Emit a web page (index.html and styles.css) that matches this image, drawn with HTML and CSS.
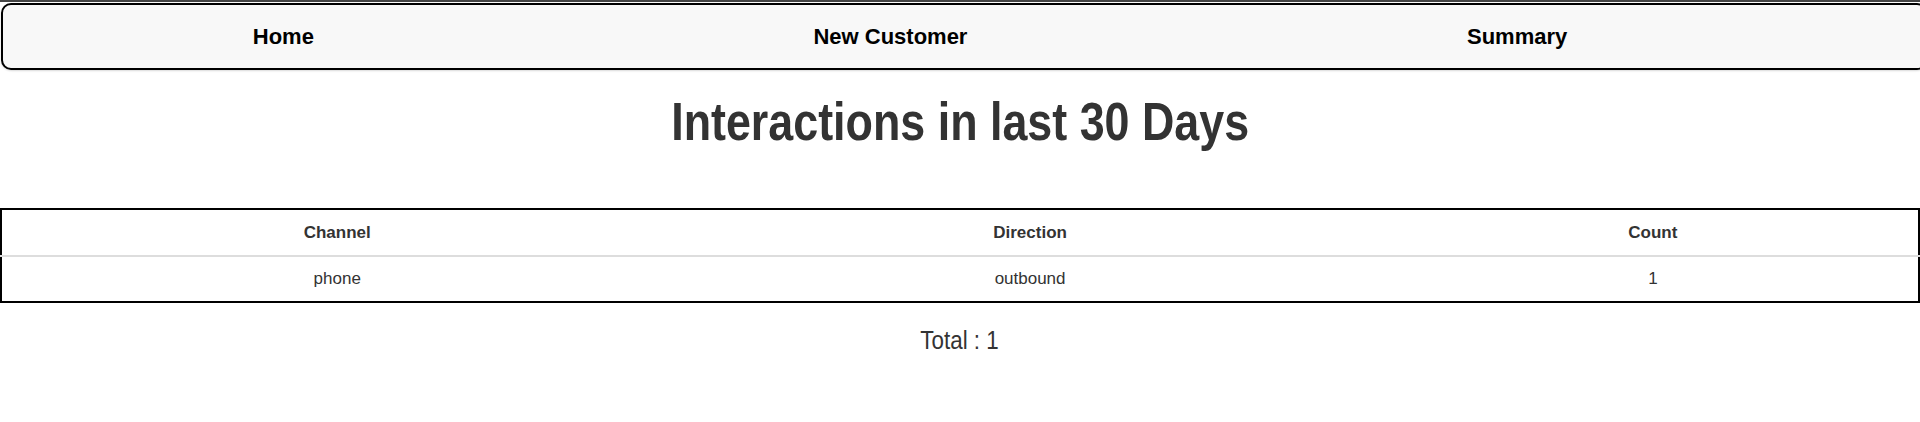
FILE: index.html
```html
<!DOCTYPE html>
<html lang="en">
<head>
<meta charset="utf-8">
<title>Interactions in last 30 Days</title>
<link rel="stylesheet" href="styles.css">
</head>
<body>
<div class="topbar"></div>
<nav class="nav">
  <div class="nav-links">
    <a class="nav-link" href="#">Home</a>
    <a class="nav-link" href="#">New Customer</a>
    <a class="nav-link" href="#">Summary</a>
  </div>
</nav>
<h1 class="title"><span class="narrow">Interactions in last 30 Days</span></h1>
<table class="table">
  <thead>
    <tr><th>Channel</th><th>Direction</th><th>Count</th></tr>
  </thead>
  <tbody>
    <tr><td>phone</td><td>outbound</td><td>1</td></tr>
  </tbody>
</table>
<p class="total"><span class="narrow narrow-total">Total : 1</span></p>
</body>
</html>
```
FILE: styles.css
```css
html, body {
  margin: 0;
  padding: 0;
  background: #fff;
  overflow-x: hidden;
}
body {
  font-family: "Liberation Sans", Arial, sans-serif;
  color: #333;
}
.topbar {
  height: 2px;
  background: #444;
}
.nav {
  box-sizing: border-box;
  margin: 1px 0 0 1px;
  width: 1926px;
  height: 67px;
  border: 2px solid #000;
  border-radius: 10px;
  background: #f8f8f8;
  box-shadow: 0 1px 2px rgba(0, 0, 0, 0.15);
}
.nav-links {
  display: flex;
  justify-content: space-around;
  align-items: center;
  width: 1814px;
  height: 100%;
}
.nav-link {
  font-size: 22px;
  font-weight: bold;
  line-height: 25px;
  color: #000;
  text-decoration: none;
}
.title {
  margin: 20px 0 0;
  font-size: 54px;
  line-height: 62px;
  font-weight: bold;
  text-align: center;
  color: #333;
}
.narrow {
  display: inline-block;
  transform: scaleX(0.83);
}
.narrow-total {
  transform: scaleX(0.86);
}
.table {
  margin-top: 56px;
  width: 100%;
  border-collapse: collapse;
  border: 2px solid #000;
  font-size: 17px;
  color: #333;
}
.table th,
.table td {
  line-height: 19px;
  text-align: center;
  padding: 12px 9px 13px;
}
.table th {
  padding-top: 13px;
  font-weight: bold;
  border-bottom: 2px solid #ddd;
}
.total {
  margin: 22px 0 0;
  font-size: 26px;
  line-height: 30px;
  text-align: center;
  color: #333;
}
```
